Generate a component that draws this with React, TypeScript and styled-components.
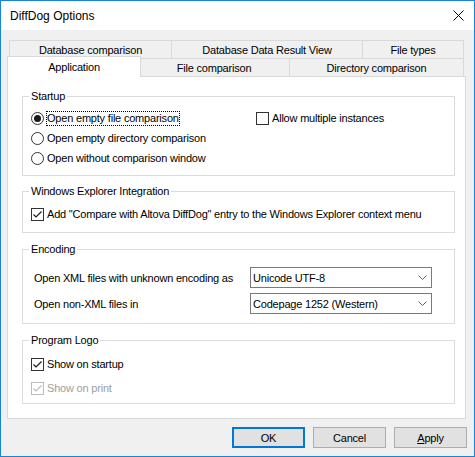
import React from "react";
import styled, { createGlobalStyle } from "styled-components";

const GlobalStyle = createGlobalStyle`
  html, body { margin: 0; padding: 0; background: #f0f0f0; }
  * { box-sizing: border-box; }
`;

const Window = styled.div`
  width: 475px;
  height: 457px;
  border: 1px solid #1883d7;
  background: #f0f0f0;
  display: flex;
  flex-direction: column;
  font-family: "Liberation Sans", Arial, sans-serif;
  font-size: 11px;
  letter-spacing: -0.2px;
  color: #000;
`;

const TitleBar = styled.div`
  height: 29px;
  flex: none;
  background: #fff;
  display: flex;
  align-items: center;
  justify-content: space-between;
  padding: 0 10px 0 9px;
`;

const Title = styled.span`
  font-size: 12px;
  letter-spacing: 0;
`;

const Body = styled.div`
  flex: 1;
  display: flex;
  flex-direction: column;
  padding: 10px 8px 0 6px;
`;

const TabStrip = styled.div`
  margin-left: 2px;
  width: 455px;
  display: flex;
  flex-direction: column;
`;

const TabRow = styled.div`
  display: flex;
  height: 18px;
`;

const Tab = styled.div<{ $w: number; $last?: boolean; $selected?: boolean }>`
  width: ${(p) => p.$w}px;
  flex: none;
  display: flex;
  align-items: center;
  justify-content: center;
  background: #f0f0f0;
  border-top: 1px solid #d9d9d9;
  border-left: 1px solid #d9d9d9;
  border-right: ${(p) => (p.$last ? "1px solid #d9d9d9" : "none")};
  white-space: nowrap;
  ${(p) =>
    p.$selected &&
    `
    position: relative;
    z-index: 1;
    background: #fff;
    border-right: 1px solid #d9d9d9;
    height: 21px;
    margin: -2px -3px 0 -2px;
    align-self: flex-start;
    padding-bottom: 1px;
  `}
`;

const Panel = styled.div`
  width: 459px;
  height: 343px;
  background: #fff;
  border: 1px solid #d9d9d9;
  display: flex;
  flex-direction: column;
  padding: 12px 10px 0 14px;
`;

const Group = styled.fieldset<{ $mt?: number }>`
  margin: ${(p) => p.$mt ?? 0}px 0 0 0;
  padding: 0;
  border: 1px solid #dcdcdc;
  min-width: 0;
`;

const Legend = styled.legend`
  margin-left: 6px;
  padding: 0 2px;
  line-height: 14px;
`;

const StartupGrid = styled.div`
  display: grid;
  grid-template-columns: 225px 1fr;
  grid-auto-rows: 20px;
  padding: 5px 0 7px 8px;
`;

const CheckArea = styled.div<{ $pt: number; $pb: number; $gap?: number }>`
  display: flex;
  flex-direction: column;
  gap: ${(p) => p.$gap ?? 0}px;
  padding: ${(p) => p.$pt}px 0 ${(p) => p.$pb}px 8px;
`;

const Row = styled.div<{ $disabled?: boolean }>`
  height: 20px;
  display: flex;
  align-items: center;
  gap: 3px;
  white-space: nowrap;
  color: ${(p) => (p.$disabled ? "#a0a0a0" : "#000")};
`;

const RadioCircle = styled.span<{ $on?: boolean }>`
  width: 13px;
  height: 13px;
  flex: none;
  border: 1px solid #333;
  border-radius: 50%;
  background: #fff;
  display: flex;
  align-items: center;
  justify-content: center;
  &::after {
    content: "";
    display: ${(p) => (p.$on ? "block" : "none")};
    width: 7px;
    height: 7px;
    border-radius: 50%;
    background: #1a1a1a;
  }
`;

const Box = styled.span<{ $disabled?: boolean }>`
  width: 13px;
  height: 13px;
  flex: none;
  border: 1px solid ${(p) => (p.$disabled ? "#bcbcbc" : "#333")};
  background: #fff;
  display: flex;
`;

const FocusText = styled.span`
  border: 1px dotted #000;
  line-height: 13px;
  margin-left: -1px;
`;

const EncGrid = styled.div`
  display: grid;
  grid-template-columns: 216px 182px;
  grid-auto-rows: 21px;
  row-gap: 5px;
  align-items: center;
  padding: 11px 0 9px 11px;
`;

const Select = styled.div`
  height: 21px;
  border: 1px solid #7a7a7a;
  background: #fff;
  display: flex;
  align-items: center;
  justify-content: space-between;
  padding: 0 4px 0 2px;
  white-space: nowrap;
`;

const ButtonBar = styled.div`
  display: flex;
  justify-content: flex-end;
  gap: 8px;
  margin: 8px -1px 0 0;
`;

const Button = styled.div<{ $default?: boolean }>`
  width: 73px;
  height: 21px;
  background: #e1e1e1;
  border: ${(p) => (p.$default ? "2px solid #0078d7" : "1px solid #adadad")};
  display: flex;
  align-items: center;
  justify-content: center;
`;

const Mnemonic = styled.span`
  text-decoration: underline;
`;

const CloseIcon = () => (
  <svg width="11" height="11" viewBox="0 0 11 11">
    <path d="M0.5 0.5 L10.5 10.5 M10.5 0.5 L0.5 10.5" stroke="#000" strokeWidth="1" fill="none" />
  </svg>
);

const Chevron = () => (
  <svg width="9" height="5" viewBox="0 0 9 5">
    <polyline points="0.5,0.5 4.5,4.5 8.5,0.5" stroke="#606060" strokeWidth="1" fill="none" />
  </svg>
);

const Radio = ({ on, children }: { on?: boolean; children: React.ReactNode }) => (
  <Row>
    <RadioCircle $on={on} />
    {children}
  </Row>
);

const Check = ({
  checked,
  disabled,
  children,
}: {
  checked?: boolean;
  disabled?: boolean;
  children: React.ReactNode;
}) => (
  <Row $disabled={disabled}>
    <Box $disabled={disabled}>
      {checked && (
        <svg width="11" height="11" viewBox="0 0 11 11">
          <polyline
            points="1.5,5.5 4,8 9.5,2.5"
            stroke={disabled ? "#bcbcbc" : "#1a1a1a"}
            strokeWidth="1.2"
            fill="none"
          />
        </svg>
      )}
    </Box>
    <span>{children}</span>
  </Row>
);

export default function App() {
  return (
    <>
      <GlobalStyle />
      <Window>
        <TitleBar>
          <Title>DiffDog Options</Title>
          <CloseIcon />
        </TitleBar>
        <Body>
          <TabStrip>
            <TabRow>
              <Tab $w={162}>Database comparison</Tab>
              <Tab $w={191}>Database Data Result View</Tab>
              <Tab $w={102} $last>
                File types
              </Tab>
            </TabRow>
            <TabRow>
              <Tab $w={134} $selected>
                Application
              </Tab>
              <Tab $w={151}>File comparison</Tab>
              <Tab $w={175} $last>
                Directory comparison
              </Tab>
            </TabRow>
          </TabStrip>
          <Panel>
            <Group>
              <Legend>Startup</Legend>
              <StartupGrid>
                <Radio on>
                  <FocusText>Open empty file comparison</FocusText>
                </Radio>
                <Check>Allow multiple instances</Check>
                <Radio>Open empty directory comparison</Radio>
                <span />
                <Radio>Open without comparison window</Radio>
              </StartupGrid>
            </Group>
            <Group $mt={8}>
              <Legend>Windows Explorer Integration</Legend>
              <CheckArea $pt={6} $pb={8}>
                <Check checked>
                  Add "Compare with Altova DiffDog" entry to the Windows Explorer context menu
                </Check>
              </CheckArea>
            </Group>
            <Group $mt={9}>
              <Legend>Encoding</Legend>
              <EncGrid>
                <span>Open XML files with unknown encoding as</span>
                <Select>
                  <span>Unicode UTF-8</span>
                  <Chevron />
                </Select>
                <span>Open non-XML files in</span>
                <Select>
                  <span>Codepage 1252 (Western)</span>
                  <Chevron />
                </Select>
              </EncGrid>
            </Group>
            <Group $mt={9}>
              <Legend>Program Logo</Legend>
              <CheckArea $pt={7} $pb={5} $gap={4}>
                <Check checked>Show on startup</Check>
                <Check checked disabled>
                  Show on print
                </Check>
              </CheckArea>
            </Group>
          </Panel>
          <ButtonBar>
            <Button $default>OK</Button>
            <Button>Cancel</Button>
            <Button>
              <span>
                <Mnemonic>A</Mnemonic>pply
              </span>
            </Button>
          </ButtonBar>
        </Body>
      </Window>
    </>
  );
}
